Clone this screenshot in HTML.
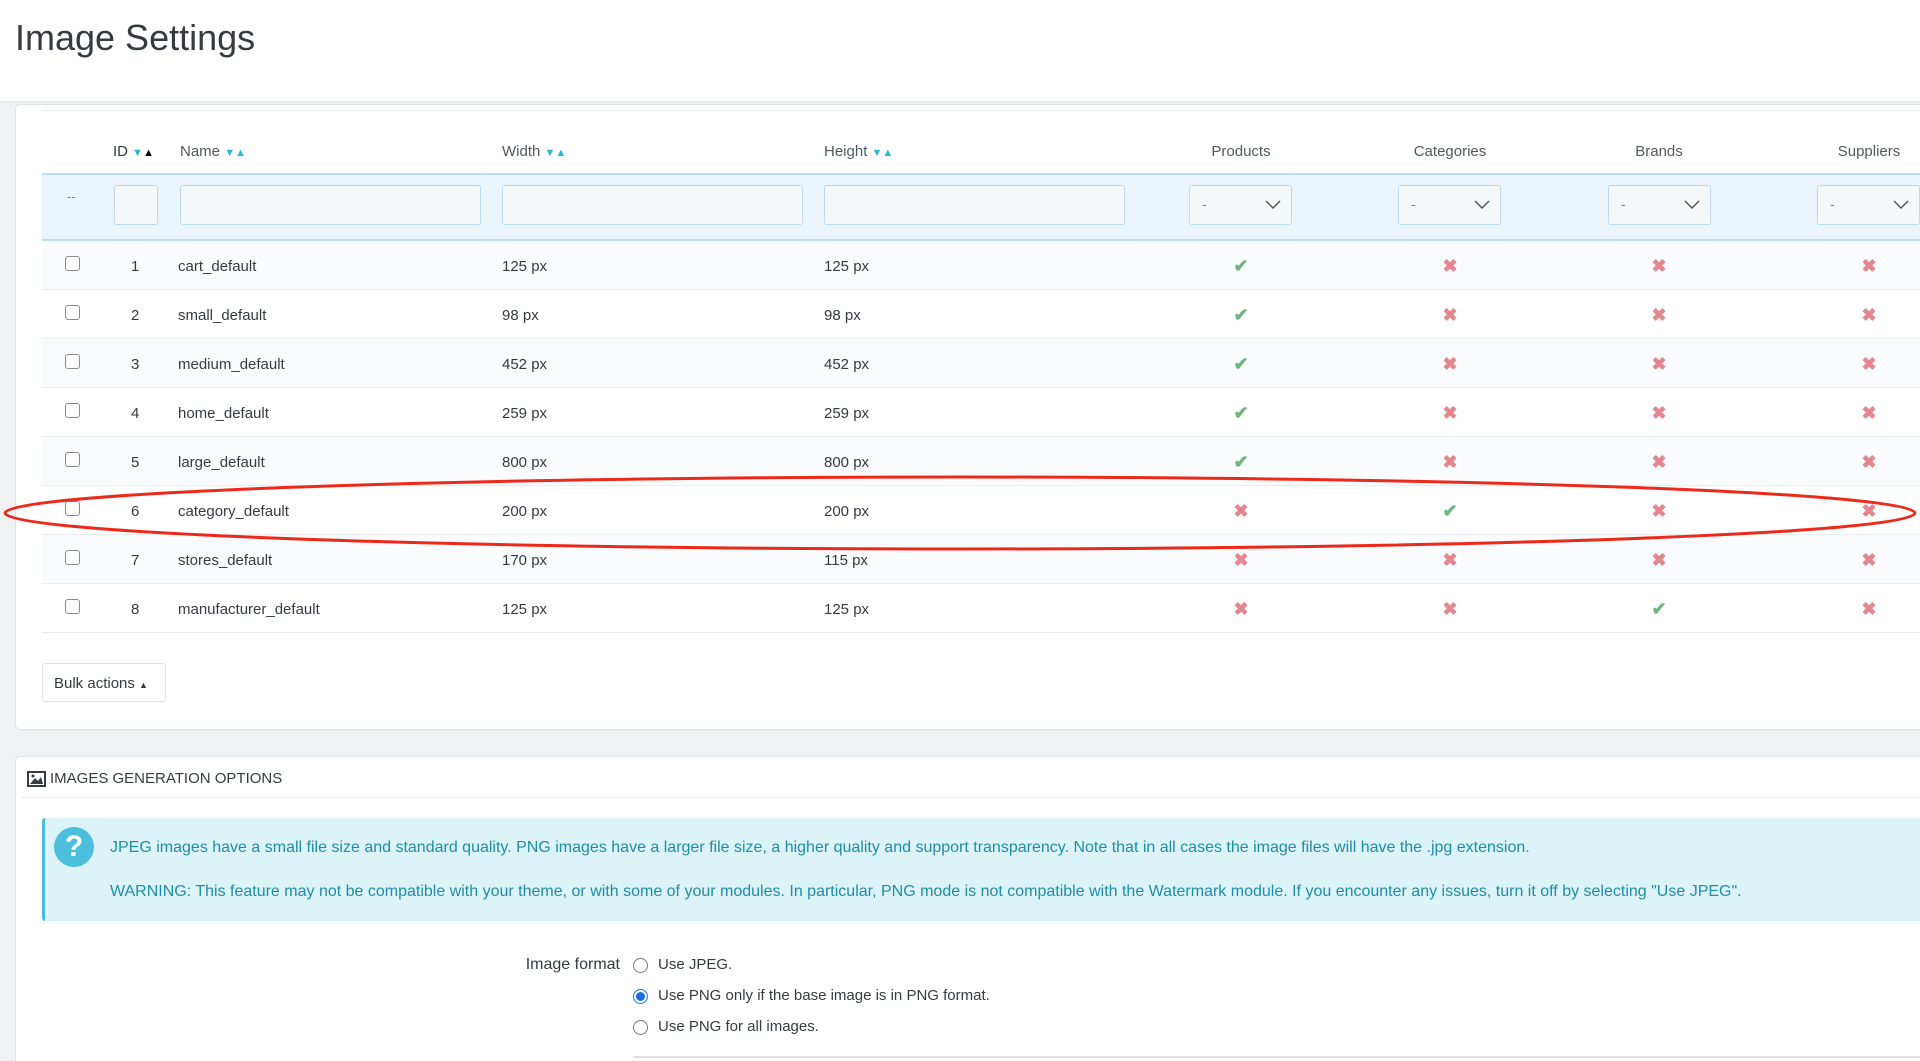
<!DOCTYPE html>
<html style="width:1920px;height:1061px;overflow:hidden"><head><meta charset="utf-8">
<style>
*{box-sizing:border-box;margin:0;padding:0}
body{width:1920px;height:1061px;overflow:hidden;background:#eff1f2;font-family:"Liberation Sans",sans-serif;color:#363a41;position:relative}
.a{position:absolute}
.hdr{left:0;top:0;width:1920px;height:102px;background:#fff;border-bottom:1px solid #dfe3e6}
.title{left:15px;top:17px;font-size:36px;color:#363a41}
.panel{background:#fff;border:1px solid #dfe3e6;border-right:none;border-radius:5px 0 0 5px}
.th{top:143px;font-size:15px;color:#4f5a60}
.arr{font-size:11px;color:#25b9d7}
.filt{left:42px;top:173px;width:1878px;height:68px;background:#eaf4fb;border-top:2px solid #bcdff0;border-bottom:2px solid #bcdff0}
.inp{top:185px;height:40px;background:#f5f8f9;border:1px solid #bbdbf0;border-radius:3px}
.sel{top:185px;height:40px;width:103px;background:#f5f8f9;border:1px solid #bbdbf0;border-radius:3px;font-size:14px;color:#6c868e;padding:10px 12px}
.sel svg{position:absolute;right:10px;top:14px}
.row{left:42px;width:1878px;height:49px;border-bottom:1px solid #eaedef;font-size:15px;color:#363a41}
.row span{position:absolute;top:17px}
.cb{position:absolute;left:23px;top:15px;width:15px;height:15px;border:1px solid #8a8a8a;border-radius:3px;background:#fff}
.ic{position:absolute;top:16px;width:18px;text-align:center;font-size:18px;font-weight:bold;line-height:18px;font-style:normal}
.ok{color:#70b580}.no{color:#e3868f}
</style></head><body>
<div class="a hdr"></div>
<div class="a title">Image Settings</div>

<div class="a panel" style="left:15px;top:104px;width:1905px;height:626px"></div>
<div class="a" style="left:42px;top:110px;width:1878px;height:1px;background:#eaedef"></div>

<div class="a th" style="left:113px;color:#363a41">ID <span class="arr">▼</span><span class="arr" style="color:#000">▲</span></div>
<div class="a th" style="left:180px">Name <span class="arr">▼▲</span></div>
<div class="a th" style="left:502px">Width <span class="arr">▼▲</span></div>
<div class="a th" style="left:824px">Height <span class="arr">▼▲</span></div>
<div class="a th" style="left:1241px;transform:translateX(-50%)">Products</div>
<div class="a th" style="left:1450px;transform:translateX(-50%)">Categories</div>
<div class="a th" style="left:1659px;transform:translateX(-50%)">Brands</div>
<div class="a th" style="left:1869px;transform:translateX(-50%)">Suppliers</div>

<div class="a filt"></div>
<div class="a" style="left:67px;top:189px;font-size:13px;color:#6c868e">--</div>
<div class="a inp" style="left:114px;width:44px"></div>
<div class="a inp" style="left:180px;width:301px"></div>
<div class="a inp" style="left:502px;width:301px"></div>
<div class="a inp" style="left:824px;width:301px"></div>
<div class="a sel" style="left:1189px">-<svg width="16" height="10"><path d="M1 1 L8 8 L15 1" stroke="#555" stroke-width="1.5" fill="none"/></svg></div>
<div class="a sel" style="left:1398px">-<svg width="16" height="10"><path d="M1 1 L8 8 L15 1" stroke="#555" stroke-width="1.5" fill="none"/></svg></div>
<div class="a sel" style="left:1608px">-<svg width="16" height="10"><path d="M1 1 L8 8 L15 1" stroke="#555" stroke-width="1.5" fill="none"/></svg></div>
<div class="a sel" style="left:1817px;width:103px;overflow:hidden">-<svg width="16" height="10"><path d="M1 1 L8 8 L15 1" stroke="#555" stroke-width="1.5" fill="none"/></svg></div>

<div class="a row" style="top:241px;background:#fafbfc"><div class="cb"></div><span style="left:89px">1</span><span style="left:136px">cart_default</span><span style="left:460px">125 px</span><span style="left:782px">125 px</span><i class="ic ok" style="left:1190px">✔</i><i class="ic no" style="left:1399px">✖</i><i class="ic no" style="left:1608px">✖</i><i class="ic no" style="left:1818px">✖</i></div>
<div class="a row" style="top:290px"><div class="cb"></div><span style="left:89px">2</span><span style="left:136px">small_default</span><span style="left:460px">98 px</span><span style="left:782px">98 px</span><i class="ic ok" style="left:1190px">✔</i><i class="ic no" style="left:1399px">✖</i><i class="ic no" style="left:1608px">✖</i><i class="ic no" style="left:1818px">✖</i></div>
<div class="a row" style="top:339px;background:#fafbfc"><div class="cb"></div><span style="left:89px">3</span><span style="left:136px">medium_default</span><span style="left:460px">452 px</span><span style="left:782px">452 px</span><i class="ic ok" style="left:1190px">✔</i><i class="ic no" style="left:1399px">✖</i><i class="ic no" style="left:1608px">✖</i><i class="ic no" style="left:1818px">✖</i></div>
<div class="a row" style="top:388px"><div class="cb"></div><span style="left:89px">4</span><span style="left:136px">home_default</span><span style="left:460px">259 px</span><span style="left:782px">259 px</span><i class="ic ok" style="left:1190px">✔</i><i class="ic no" style="left:1399px">✖</i><i class="ic no" style="left:1608px">✖</i><i class="ic no" style="left:1818px">✖</i></div>
<div class="a row" style="top:437px;background:#fafbfc"><div class="cb"></div><span style="left:89px">5</span><span style="left:136px">large_default</span><span style="left:460px">800 px</span><span style="left:782px">800 px</span><i class="ic ok" style="left:1190px">✔</i><i class="ic no" style="left:1399px">✖</i><i class="ic no" style="left:1608px">✖</i><i class="ic no" style="left:1818px">✖</i></div>
<div class="a row" style="top:486px"><div class="cb"></div><span style="left:89px">6</span><span style="left:136px">category_default</span><span style="left:460px">200 px</span><span style="left:782px">200 px</span><i class="ic no" style="left:1190px">✖</i><i class="ic ok" style="left:1399px">✔</i><i class="ic no" style="left:1608px">✖</i><i class="ic no" style="left:1818px">✖</i></div>
<div class="a row" style="top:535px;background:#fafbfc"><div class="cb"></div><span style="left:89px">7</span><span style="left:136px">stores_default</span><span style="left:460px">170 px</span><span style="left:782px">115 px</span><i class="ic no" style="left:1190px">✖</i><i class="ic no" style="left:1399px">✖</i><i class="ic no" style="left:1608px">✖</i><i class="ic no" style="left:1818px">✖</i></div>
<div class="a row" style="top:584px"><div class="cb"></div><span style="left:89px">8</span><span style="left:136px">manufacturer_default</span><span style="left:460px">125 px</span><span style="left:782px">125 px</span><i class="ic no" style="left:1190px">✖</i><i class="ic no" style="left:1399px">✖</i><i class="ic ok" style="left:1608px">✔</i><i class="ic no" style="left:1818px">✖</i></div>

<div class="a" style="left:42px;top:663px;width:124px;height:39px;border:1px solid #dfe3e6;border-radius:3px;background:#fff;font-size:15px;padding:11px 0 0 11px">Bulk actions <span style="font-size:9px">▲</span></div>

<div class="a panel" style="left:15px;top:756px;width:1905px;height:305px;border-bottom:none;border-radius:5px 0 0 0"></div>
<div class="a" style="left:27px;top:770px;font-size:15px;color:#363a41;display:flex;align-items:center"><svg width="19" height="16" style="margin-right:4px"><rect x="1" y="1" width="17" height="14" fill="#fff" stroke="#363a41" stroke-width="2"/><path d="M3 13 L8 7 L11 10 L14 6 L16 13Z" fill="#363a41"/><circle cx="6" cy="5" r="1.5" fill="#363a41"/></svg>IMAGES GENERATION OPTIONS</div>
<div class="a" style="left:21px;top:797px;width:1899px;height:1px;background:#eaedef"></div>

<div class="a" style="left:42px;top:818px;width:1878px;height:103px;background:#dcf3f8;border-left:3px solid #4cbcd9;border-radius:3px 0 0 3px"></div>
<div class="a" style="left:54px;top:827px;width:40px;height:40px;border-radius:50%;background:#4cbfdc;color:#fff;font-weight:bold;font-size:30px;text-align:center;line-height:40px">?</div>
<div class="a" style="left:110px;top:839px;font-size:16px;color:#1f8da8;white-space:nowrap">JPEG images have a small file size and standard quality. PNG images have a larger file size, a higher quality and support transparency. Note that in all cases the image files will have the .jpg extension.</div>
<div class="a" style="left:110px;top:883px;font-size:16px;color:#1f8da8;white-space:nowrap">WARNING: This feature may not be compatible with your theme, or with some of your modules. In particular, PNG mode is not compatible with the Watermark module. If you encounter any issues, turn it off by selecting "Use JPEG".</div>

<div class="a" style="left:460px;width:160px;text-align:right;top:956px;font-size:16px;color:#363a41">Image format</div>
<div class="a" style="left:633px;top:958px;width:15px;height:15px;border:1px solid #777;border-radius:50%;background:#fff"></div>
<div class="a" style="left:658px;top:956px;font-size:15px">Use JPEG.</div>
<div class="a" style="left:633px;top:989px;width:15px;height:15px;border:1px solid #1a6fe0;border-radius:50%;background:#fff"><div style="margin:2px;width:9px;height:9px;border-radius:50%;background:#1a6fe0"></div></div>
<div class="a" style="left:658px;top:987px;font-size:15px">Use PNG only if the base image is in PNG format.</div>
<div class="a" style="left:633px;top:1020px;width:15px;height:15px;border:1px solid #777;border-radius:50%;background:#fff"></div>
<div class="a" style="left:658px;top:1018px;font-size:15px">Use PNG for all images.</div>
<div class="a" style="left:633px;top:1056px;width:1287px;height:2px;background:#dfe3e6"></div>

<svg class="a" style="left:0;top:0" width="1920" height="1061"><ellipse cx="960" cy="513" rx="955" ry="36" fill="none" stroke="#ec2a1c" stroke-width="3"/></svg>
</body></html>
